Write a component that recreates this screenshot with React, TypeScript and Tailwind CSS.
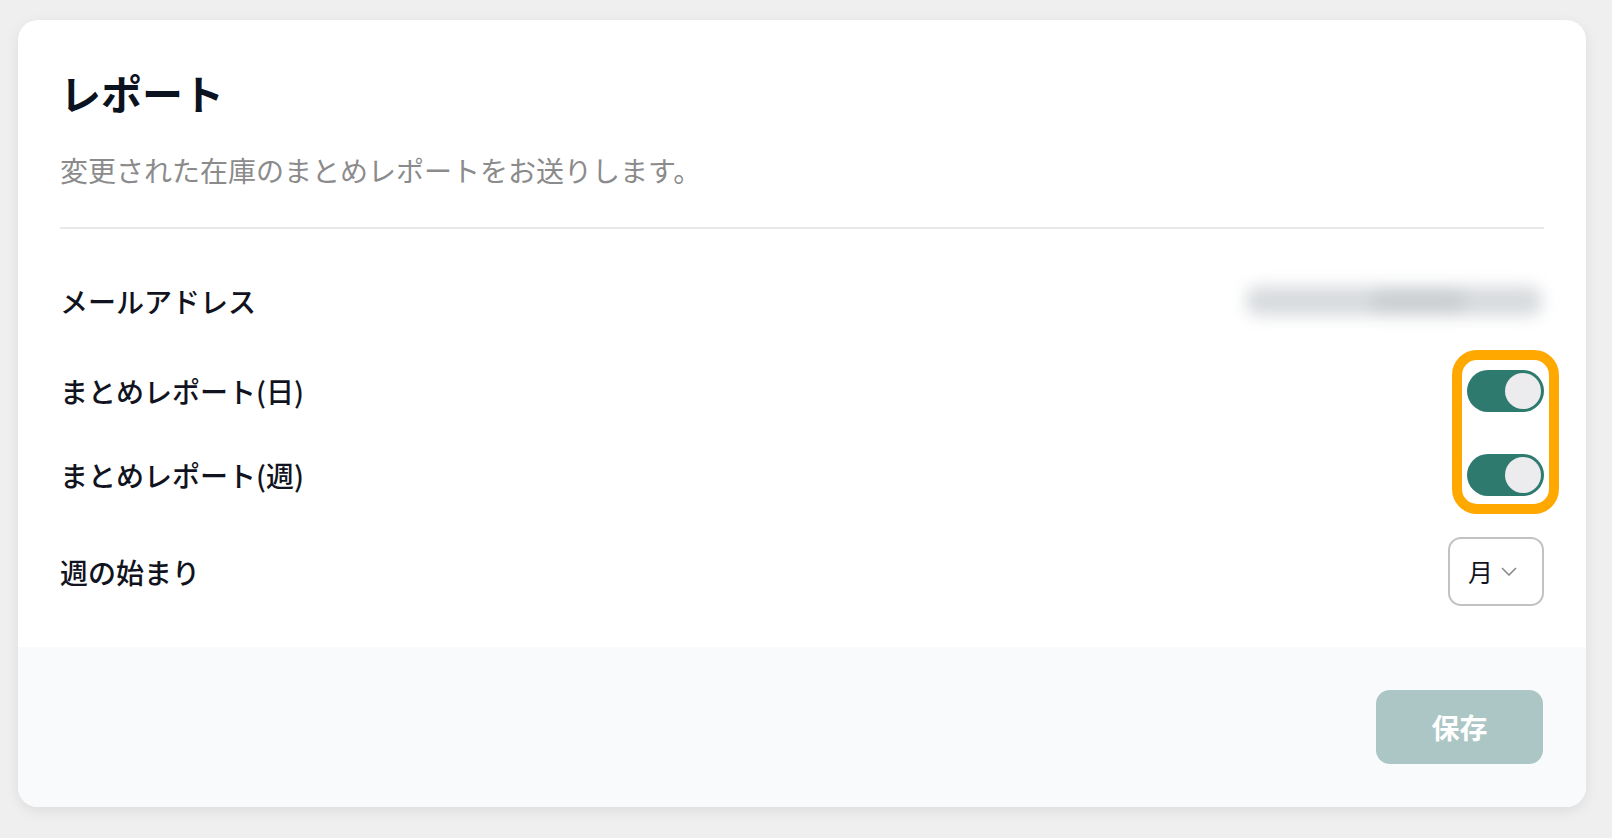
import React from "react";

const jp = { fontFamily: '"Noto Sans CJK JP", "Noto Sans", sans-serif' };

function Toggle() {
  return (
    <div className="flex h-[42px] w-[77px] items-center justify-end rounded-full bg-[#2e7a6f] p-[3px]">
      <div className="h-[36px] w-[36px] rounded-full bg-[#ececee]" />
    </div>
  );
}

function Row({ label, className, children }: { label: string; className: string; children: React.ReactNode }) {
  return (
    <div className={`flex items-center justify-between ${className}`}>
      <span className="text-[28px] font-medium leading-[40px] text-[#111420]">{label}</span>
      {children}
    </div>
  );
}

export default function App() {
  return (
    <div className="min-h-screen bg-[#efefef] pl-[18px] pt-[20px]" style={jp}>
      <div className="relative flex h-[787px] w-[1568px] flex-col overflow-hidden rounded-[20px] bg-white shadow-[0_4px_14px_rgba(0,0,0,0.08)]">
        <div className="flex-1 px-[42px] pt-[48px]">
          <h1 className="text-[41px] font-bold leading-[48px] text-[#0b1220]">レポート</h1>
          <p className="mt-[34px] text-[28px] leading-[40px] text-[#8b8b8b]">
            変更された在庫のまとめレポートをお送りします。
          </p>
          <div className="mt-[37px] h-[2px] bg-[#e6e8ea]" />

          <Row label="メールアドレス" className="mt-[42px] h-[60px]">
            {/* redacted address */}
            <div className="mr-[2px] flex h-[30px] w-[296px] items-center rounded-[12px] bg-[#d8dbde] blur-[8px]">
              <div className="ml-[125px] h-[26px] w-[95px] rounded-full bg-[#cbcfd2]" />
            </div>
          </Row>
          <Row label="まとめレポート(日)" className="mt-[30px] h-[60px]">
            <Toggle />
          </Row>
          <Row label="まとめレポート(週)" className="mt-[24px] h-[60px]">
            <Toggle />
          </Row>
          <Row label="週の始まり" className="mt-[32px] h-[69px]">
            <button
              type="button"
              className="flex h-[69px] w-[96px] items-center gap-[8px] rounded-[13px] border-2 border-[#c2c2c2] bg-white pl-[18px]"
            >
              <span className="text-[25px] leading-none text-[#111420]">月</span>
              <svg width="16" height="9" viewBox="0 0 16 9" fill="none">
                <path d="M1 1l7 7 7-7" stroke="#8a8a8a" strokeWidth="1.6" />
              </svg>
            </button>
          </Row>
        </div>

        <div className="flex h-[160px] items-center justify-end bg-[#f8fafb] px-[43px]">
          <button
            type="button"
            className="h-[74px] w-[167px] rounded-[14px] bg-[#abc6c4] text-[28px] font-bold text-white"
          >
            保存
          </button>
        </div>

        <div className="pointer-events-none absolute left-[1434px] top-[330px] h-[164px] w-[107px] rounded-[25px] border-[10px] border-[#ffa800]" />
      </div>
    </div>
  );
}
